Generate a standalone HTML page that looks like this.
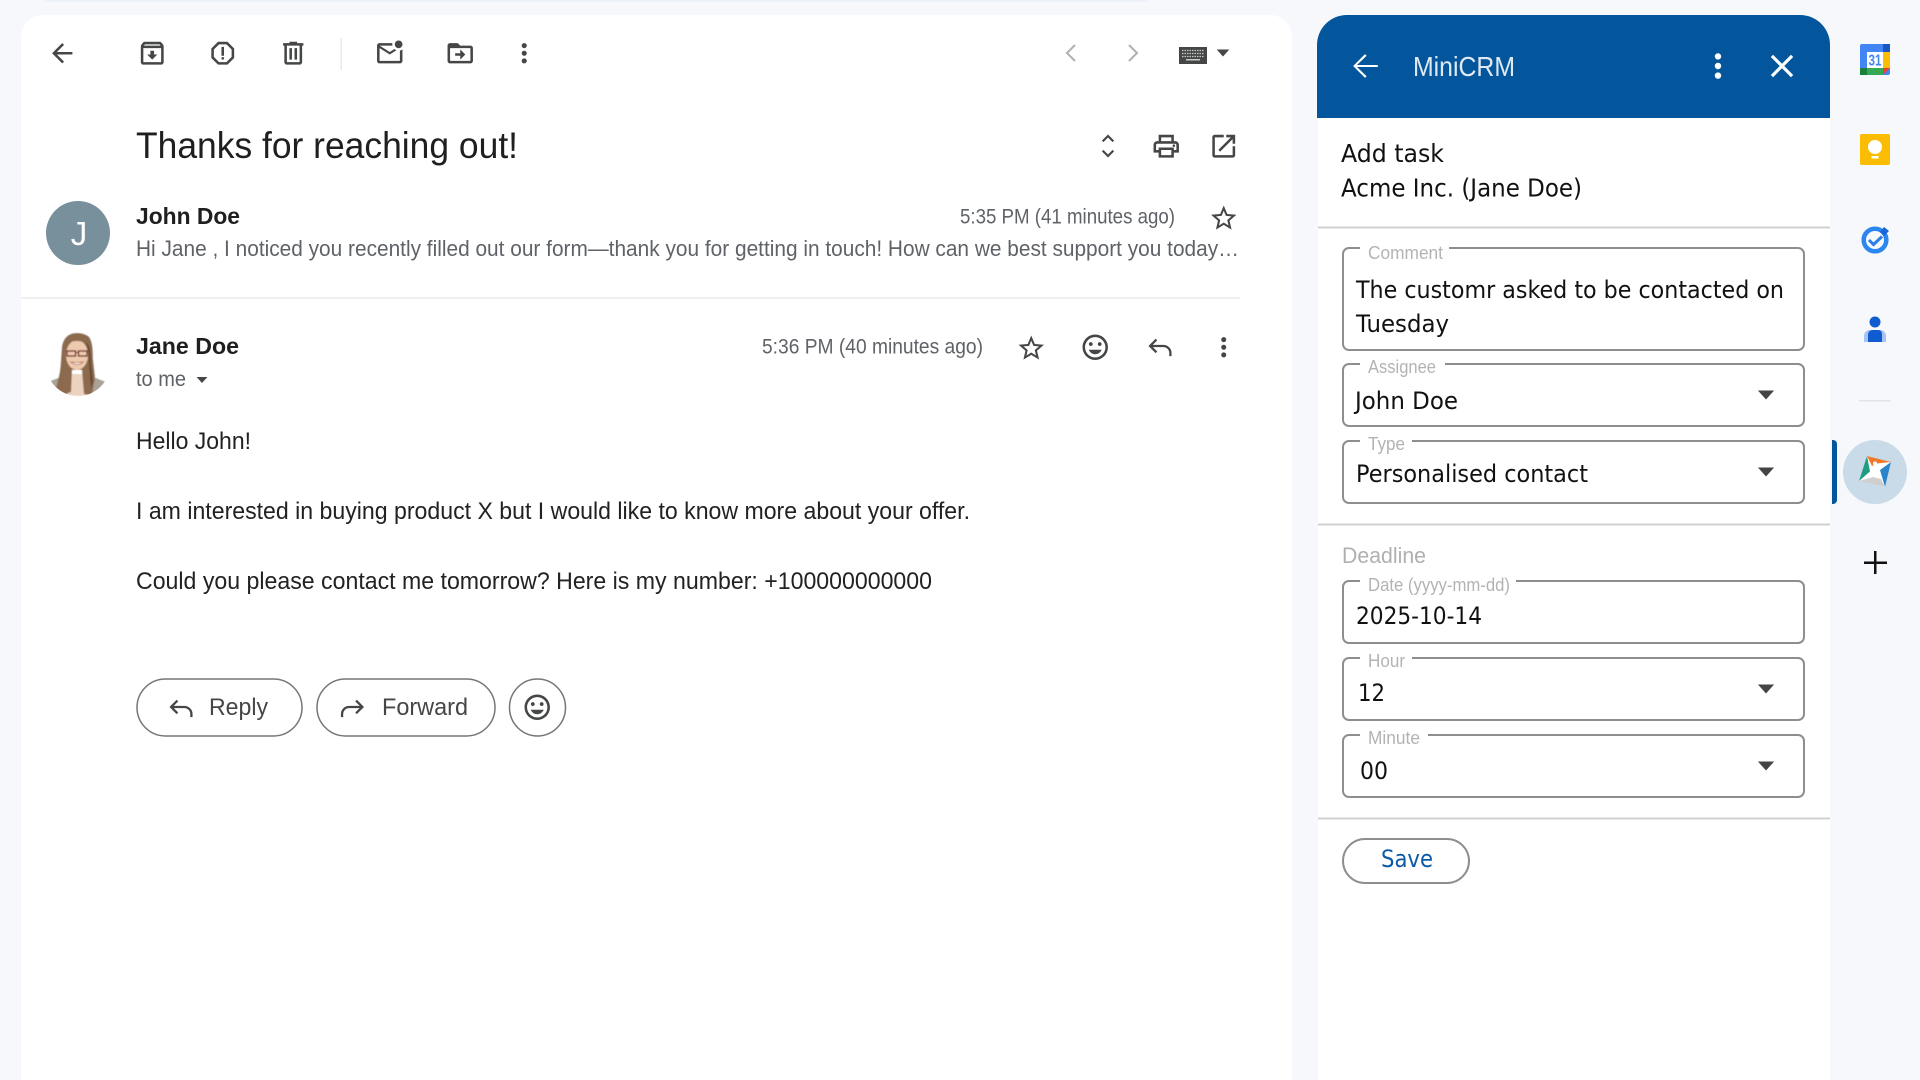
<!DOCTYPE html>
<html><head><meta charset="utf-8"><style>
html,body{margin:0;padding:0;width:1920px;height:1080px;overflow:hidden;background:#f6f8fc}
svg{display:block}
text{font-family:"Liberation Sans",sans-serif}
.o{font-family:"DejaVu Sans","Liberation Sans",sans-serif;fill:#111}
.l{font-family:"Liberation Sans",sans-serif;fill:#b3b3b3;font-size:18px}
.g{fill:#5f6368}
.f{fill:#fff;stroke:#8e8e8e;stroke-width:2}
</style></head><body>
<svg width="1920" height="1080" viewBox="0 0 1920 1080" xmlns="http://www.w3.org/2000/svg">
<defs>
<path id="more" d="M12 8c1.1 0 2-.9 2-2s-.9-2-2-2-2 .9-2 2 .9 2 2 2zm0 2c-1.1 0-2 .9-2 2s.9 2 2 2 2-.9 2-2-.9-2-2-2zm0 6c-1.1 0-2 .9-2 2s.9 2 2 2 2-.9 2-2-.9-2-2-2z"/>
<path id="star" d="M22 9.24l-7.19-.62L12 2 9.19 8.63 2 9.24l5.46 4.73L5.82 21 12 17.27 18.18 21l-1.63-7.03L22 9.24zM12 15.4l-3.76 2.27 1-4.28-3.32-2.88 4.38-.38L12 6.1l1.71 4.04 4.38.38-3.32 2.88 1 4.28L12 15.4z"/>
<path id="mood" d="M11.99 2C6.47 2 2 6.48 2 12s4.47 10 9.99 10C17.52 22 22 17.52 22 12S17.52 2 11.99 2zM12 20c-4.42 0-8-3.58-8-8s3.58-8 8-8 8 3.58 8 8-3.58 8-8 8zm3.5-9c.83 0 1.5-.67 1.5-1.5S16.33 8 15.5 8 14 8.67 14 9.5s.67 1.5 1.5 1.5zm-7 0c.83 0 1.5-.67 1.5-1.5S9.33 8 8.5 8 7 8.67 7 9.5 7.67 11 8.5 11zm3.5 6.5c2.33 0 4.31-1.46 5.11-3.5H6.89c.8 2.04 2.78 3.5 5.11 3.5z"/>
<path id="caret" d="M-9 -5H9L0 5z"/>
<clipPath id="av"><circle cx="78" cy="364" r="32"/></clipPath>
<filter id="soft" x="-10%" y="-10%" width="120%" height="120%"><feGaussianBlur stdDeviation=".6"/></filter>
</defs>

<rect x="45" y="0" width="1102" height="2" fill="#edf2fa"/>
<!-- main card -->
<path d="M21 1080V37a22 22 0 0 1 22-22H1270a22 22 0 0 1 22 22V1080z" fill="#fff"/>

<!-- toolbar -->
<g fill="#444746">
<g transform="translate(47,38) scale(1.27)"><path d="M20 11H7.83l5.59-5.59L12 4l-8 8 8 8 1.41-1.41L7.83 13H20v-2z"/></g>
<g transform="translate(137,38) scale(1.27)"><path d="M20.54 5.23l-1.39-1.68C18.88 3.21 18.47 3 18 3H6c-.47 0-.88.21-1.16.55L3.46 5.23C3.17 5.57 3 6.02 3 6.5V19c0 1.1.9 2 2 2h14c1.1 0 2-.9 2-2V6.5c0-.48-.17-.93-.46-1.27zM6.24 5h11.52l.83 1H5.42l.82-1zM5 19V8h14v11H5zm8.45-9h-2.9v3H8l4 4 4-4h-2.55z"/></g>
<g transform="translate(207.500,38) scale(1.27)"><path d="M15.73 3H8.27L3 8.27v7.46L8.27 21h7.46L21 15.73V8.27L15.73 3zM19 14.9L14.9 19H9.1L5 14.9V9.1L9.1 5h5.8L19 9.1v5.8z"/><circle cx="12" cy="16" r="1"/><path d="M11 7h2v7h-2z"/></g>
<g transform="translate(278,38) scale(1.27)"><path d="M15 4V3H9v1H4v2h1v13c0 1.1.9 2 2 2h10c1.1 0 2-.9 2-2V6h1V4h-5zm2 15H7V6h10v13zM9 8h2v9H9zm4 0h2v9h-2z"/></g>
<g transform="translate(374.500,38) scale(1.27)"><path d="M22 8.98V18c0 1.1-.9 2-2 2H4c-1.1 0-2-.9-2-2V6c0-1.1.9-2 2-2h10.1c-.06.32-.1.66-.1 1s.04.68.1 1H4l8 5 3.67-2.29c.47.43 1.02.76 1.63.98L12 13 4 8v10h16V9.9c.74-.15 1.42-.48 2-.92zM16 5c0 1.66 1.34 3 3 3s3-1.34 3-3-1.34-3-3-3-3 1.34-3 3z"/></g>
<g transform="translate(445,38) scale(1.27)"><path d="M20 6h-8l-2-2H4c-1.1 0-1.99.9-1.99 2L2 18c0 1.1.9 2 2 2h16c1.1 0 2-.9 2-2V8c0-1.1-.9-2-2-2zm0 12H4V8h16v10zm-8-4H8v-2h4V9l4 4-4 4v-3z"/></g>
<g transform="translate(509,38) scale(1.27)"><use href="#more"/></g>
</g>
<rect x="340.500" y="38" width="1.500" height="32" fill="#e9eaec"/>

<polyline points="1075,45 1067,53 1075,61" fill="none" stroke="#b0b0b0" stroke-width="2"/>
<polyline points="1129,45 1137,53 1129,61" fill="none" stroke="#b0b0b0" stroke-width="2"/>
<rect x="1179" y="47" width="28" height="17" fill="#444746"/>
<path d="M1182 50.500h22M1182 53.500h22M1182 56.500h22" stroke="#c8c8c8" stroke-width="1.200" stroke-dasharray="1.500 1"/>
<rect x="1186" y="59" width="14" height="1.500" fill="#c8c8c8"/>
<use href="#caret" transform="translate(1223,53) scale(.7)" fill="#444746"/>

<!-- subject -->
<text x="136" y="158" font-size="37" fill="#1f1f1f" textLength="382" lengthAdjust="spacingAndGlyphs">Thanks for reaching out!</text>
<g fill="#444746">
<g transform="translate(1090.600,128.600) scale(1.45)"><path d="M12 5.83L15.17 9l.7-.7L12 4.400 8.130 8.300l.7.7L12 5.830zm0 12.340L8.830 15l-.7.7L12 19.600l3.870-3.900-.7-.7L12 18.170z" stroke="#444746" stroke-width=".5"/></g>
<g transform="translate(1151,131) scale(1.27)"><path d="M19 8h-1V3H6v5H5c-1.66 0-3 1.34-3 3v6h4v4h12v-4h4v-6c0-1.66-1.34-3-3-3zM8 5h8v3H8V5zm8 12v2H8v-4h8v2zm2-2v-2H6v2H4v-4c0-.55.45-1 1-1h14c.55 0 1 .45 1 1v4h-2z"/><circle cx="18" cy="11.500" r="1"/></g>
<g transform="translate(1208.500,131) scale(1.27)"><path d="M19 19H5V5h7V3H5c-1.11 0-2 .9-2 2v14c0 1.1.89 2 2 2h14c1.1 0 2-.9 2-2v-7h-2v7zM14 3v2h3.59l-9.83 9.83 1.41 1.41L19 6.41V10h2V3h-7z"/></g>
</g>

<!-- message 1 -->
<circle cx="78" cy="233" r="32" fill="#78909c"/>
<text x="79" y="245" font-size="33" fill="#fff" text-anchor="middle">J</text>
<text x="136" y="224" font-size="23" font-weight="700" fill="#1f1f1f" textLength="104" lengthAdjust="spacingAndGlyphs">John Doe</text>
<text x="136" y="256" font-size="22" class="g" textLength="1103" lengthAdjust="spacingAndGlyphs">Hi Jane , I noticed you recently filled out our form—thank you for getting in touch! How can we best support you today…</text>
<text x="960" y="223.500" font-size="21" class="g" textLength="215" lengthAdjust="spacingAndGlyphs">5:35 PM (41 minutes ago)</text>
<g transform="translate(1208.500,203) scale(1.27)" fill="#444746"><use href="#star"/></g>
<rect x="21" y="297" width="1219" height="2" fill="#eeeff0"/>

<!-- message 2 -->
<g clip-path="url(#av)"><g filter="url(#soft)">
<rect x="46" y="332" width="64" height="64" fill="#fff"/>
<path d="M48 382l10-4 10-2h18l10 2 10 4v14H48z" fill="#a9a297"/>
<path d="M68 374h17l1 22H67z" fill="#ecd3c0"/>
<path d="M77 333c-8 0-13 4-15 13-1 10-1 22-3 30l-3 13 9 5 6-2 1-22h10l2 24 8 1 3-18-2-18c0-11-1-20-5-23-3-2-7-3-11-3z" fill="#8c6a4e"/>
<path d="M85 340c3 6 4 14 4 24l2 24 2-6-2-18c0-10-1-19-6-24z" fill="#6a4a34"/>
<ellipse cx="77" cy="355" rx="11" ry="15" fill="#edc9ae"/>
<path d="M66 343c3-4 8-5 11-5s8 2 11 5c-4-1-8-2-11-2s-7 1-11 2z" fill="#8c6a4e"/>
<rect x="67" y="351" width="8.500" height="5" fill="none" stroke="#6d2f25" stroke-width="1.300"/>
<rect x="78.500" y="351" width="8.500" height="5" fill="none" stroke="#6d2f25" stroke-width="1.300"/>
<rect x="75" y="352" width="4" height="1" fill="#6d2f25"/>
<path d="M71 362q6 5 12 0q-6 1-12 0z" fill="#fff" stroke="#b5604f" stroke-width=".8"/>
</g></g>
<text x="136" y="354" font-size="23" font-weight="700" fill="#1f1f1f" textLength="103" lengthAdjust="spacingAndGlyphs">Jane Doe</text>
<text x="136" y="386" font-size="21" class="g" textLength="50" lengthAdjust="spacingAndGlyphs">to me</text>
<use href="#caret" transform="translate(202,380) scale(.6)" fill="#444746"/>
<text x="762" y="353.500" font-size="21" class="g" textLength="221" lengthAdjust="spacingAndGlyphs">5:36 PM (40 minutes ago)</text>
<g fill="#444746">
<g transform="translate(1016,333) scale(1.27)"><use href="#star"/></g>
<g transform="translate(1080,332) scale(1.27)"><use href="#mood"/></g>
<g transform="translate(1208.500,332) scale(1.27)"><use href="#more"/></g>
</g>
<g transform="translate(1145,332) scale(1.27)" fill="none" stroke="#444746" stroke-width="1.800"><path d="M9 6L4 11l5 5M4 11h10.500a5.500 5.500 0 0 1 5.500 5.500V19"/></g>

<!-- body -->
<text x="136" y="449" font-size="24" fill="#222" textLength="115" lengthAdjust="spacingAndGlyphs">Hello John!</text>
<text x="136" y="519" font-size="24" fill="#222" textLength="834" lengthAdjust="spacingAndGlyphs">I am interested in buying product X but I would like to know more about your offer.</text>
<text x="136" y="589" font-size="24" fill="#222" textLength="796" lengthAdjust="spacingAndGlyphs">Could you please contact me tomorrow? Here is my number: +100000000000</text>

<!-- buttons -->
<rect x="137" y="679" width="165" height="57" rx="28.500" fill="#fff" stroke="#747775" stroke-width="1.500"/>
<rect x="317" y="679" width="178" height="57" rx="28.500" fill="#fff" stroke="#747775" stroke-width="1.500"/>
<ellipse cx="537.500" cy="707.500" rx="28" ry="28.500" fill="#fff" stroke="#747775" stroke-width="1.500"/>
<g transform="translate(166,693) scale(1.27)" fill="none" stroke="#444746" stroke-width="1.800"><path d="M9 6L4 11l5 5M4 11h10.500a5.500 5.500 0 0 1 5.500 5.500V19"/></g>
<g transform="translate(337,693) scale(1.27)" fill="none" stroke="#444746" stroke-width="1.800"><path d="M15 6l5 5-5 5M20 11H9.500A5.500 5.500 0 0 0 4 16.500V19"/></g>
<text x="209" y="715" font-size="24" fill="#444746" textLength="59" lengthAdjust="spacingAndGlyphs">Reply</text>
<text x="382" y="715" font-size="24" fill="#444746" textLength="86" lengthAdjust="spacingAndGlyphs">Forward</text>
<g transform="translate(522,692) scale(1.27)" fill="#444746"><use href="#mood"/></g>

<!-- side panel -->
<path d="M1318 1080V118H1830V1080z" fill="#fff"/>
<path d="M1317 118V45a30 30 0 0 1 30-30H1800a30 30 0 0 1 30 30V118z" fill="#03569b"/>
<g transform="translate(1345.800,46.800) scale(1.6)" fill="#fff"><path d="M20 11.400H7L13 5.600 12 4.600 4.600 12 12 19.400l1-1-6-5.800h13v-1.200z"/></g>
<text x="1413" y="76" font-size="28" fill="#dfe9f3" textLength="102" lengthAdjust="spacingAndGlyphs">MiniCRM</text>
<g transform="translate(1698.800,46.800) scale(1.6)" fill="#fff"><use href="#more"/></g>
<g transform="translate(1762.800,46.800) scale(1.6)" fill="#fff"><path d="M19 6.410L17.590 5 12 10.590 6.410 5 5 6.410 10.590 12 5 17.590 6.410 19 12 13.410 17.590 19 19 17.590 13.410 12z"/></g>

<text x="1341" y="162" font-size="25" class="o" textLength="103" lengthAdjust="spacingAndGlyphs">Add task</text>
<text x="1341" y="196.500" font-size="25" class="o" textLength="241" lengthAdjust="spacingAndGlyphs">Acme Inc. (Jane Doe)</text>
<rect x="1318" y="226.500" width="512" height="2" fill="#d0d0d0"/>

<!-- comment -->
<rect x="1343" y="248" width="461" height="102" rx="6" class="f"/>
<rect x="1360" y="244" width="89" height="8" fill="#fff"/>
<text x="1368" y="259" class="l" textLength="75" lengthAdjust="spacingAndGlyphs">Comment</text>
<text x="1356" y="298" font-size="24" class="o" textLength="428" lengthAdjust="spacingAndGlyphs">The customr asked to be contacted on</text>
<text x="1356" y="332" font-size="24" class="o" textLength="93" lengthAdjust="spacingAndGlyphs">Tuesday</text>

<!-- assignee -->
<rect x="1343" y="364" width="461" height="62" rx="6" class="f"/>
<rect x="1360" y="360" width="85" height="8" fill="#fff"/>
<text x="1368" y="373" class="l" textLength="68" lengthAdjust="spacingAndGlyphs">Assignee</text>
<text x="1355" y="409" font-size="24" class="o" textLength="103" lengthAdjust="spacingAndGlyphs">John Doe</text>
<use href="#caret" transform="translate(1766,395) scale(.9)" fill="#444"/>

<!-- type -->
<rect x="1343" y="441" width="461" height="62" rx="6" class="f"/>
<rect x="1360" y="437" width="52" height="8" fill="#fff"/>
<text x="1368" y="450" class="l" textLength="37" lengthAdjust="spacingAndGlyphs">Type</text>
<text x="1356" y="482" font-size="24" class="o" textLength="232" lengthAdjust="spacingAndGlyphs">Personalised contact</text>
<use href="#caret" transform="translate(1766,472) scale(.9)" fill="#444"/>

<rect x="1318" y="523.500" width="512" height="2" fill="#d0d0d0"/>
<text x="1342" y="563" font-size="22" fill="#b0b0b0" textLength="84" lengthAdjust="spacingAndGlyphs">Deadline</text>

<!-- date -->
<rect x="1343" y="581" width="461" height="62" rx="6" class="f"/>
<rect x="1360" y="577" width="156" height="8" fill="#fff"/>
<text x="1368" y="591" class="l" textLength="142" lengthAdjust="spacingAndGlyphs">Date (yyyy-mm-dd)</text>
<text x="1356" y="624" font-size="24" class="o" textLength="126" lengthAdjust="spacingAndGlyphs">2025-10-14</text>

<!-- hour -->
<rect x="1343" y="658" width="461" height="62" rx="6" class="f"/>
<rect x="1360" y="654" width="52" height="8" fill="#fff"/>
<text x="1368" y="667" class="l" textLength="37" lengthAdjust="spacingAndGlyphs">Hour</text>
<text x="1358" y="701" font-size="24" class="o" textLength="27" lengthAdjust="spacingAndGlyphs">12</text>
<use href="#caret" transform="translate(1766,689) scale(.9)" fill="#444"/>

<!-- minute -->
<rect x="1343" y="735" width="461" height="62" rx="6" class="f"/>
<rect x="1360" y="731" width="68" height="8" fill="#fff"/>
<text x="1368" y="744" class="l" textLength="52" lengthAdjust="spacingAndGlyphs">Minute</text>
<text x="1360" y="779" font-size="24" class="o" textLength="28" lengthAdjust="spacingAndGlyphs">00</text>
<use href="#caret" transform="translate(1766,766) scale(.9)" fill="#444"/>

<rect x="1318" y="817.500" width="512" height="2" fill="#d0d0d0"/>
<rect x="1343" y="839" width="126" height="44" rx="22" class="f"/>
<text x="1381" y="867" font-size="24" class="o" style="fill:#0b5aa6" textLength="52" lengthAdjust="spacingAndGlyphs">Save</text>

<!-- right rail -->
<g>
<rect x="1860" y="44" width="30" height="31" rx="2" fill="#4285f4"/>
<rect x="1883" y="44" width="7" height="8" fill="#1a56c4"/>
<rect x="1883" y="52" width="7" height="16" fill="#fbbc04"/>
<rect x="1860" y="68" width="7" height="7" fill="#188038"/>
<rect x="1867" y="68" width="16" height="7" fill="#34a853"/>
<path d="M1883 68h7l-7 7z" fill="#ea4335"/>
<rect x="1867" y="52" width="16" height="16" fill="#fff"/>
<text x="1875" y="65.500" font-size="16" font-weight="700" fill="#4285f4" text-anchor="middle" textLength="13" lengthAdjust="spacingAndGlyphs">31</text>
</g>
<rect x="1860" y="134" width="30" height="31" rx="2" fill="#fbbc04"/>
<circle cx="1875" cy="147" r="7" fill="#fff"/>
<rect x="1871.500" y="156" width="7" height="2.500" fill="#fff"/>
<circle cx="1875" cy="240" r="11.300" fill="none" stroke="#2b86f0" stroke-width="4.500"/>
<path d="M1869 240l4.500 4.500 8.500-8" fill="none" stroke="#2b7de9" stroke-width="3"/>
<path d="M1884 227l5 4-5 5-4-4z" fill="#1a65d8"/>
<circle cx="1875" cy="322" r="5.500" fill="#0f5bd0"/>
<path d="M1864 342v-6c0-4 3-6 6-6h10c3 0 6 2 6 6v6z" fill="#a5c3f3"/>
<path d="M1868 342v-7c0-3 2-5 5-5h5c3 0 4 2 4 5v7z" fill="#0f5bd0"/>
<rect x="1859" y="400" width="32" height="1.500" fill="#e3e4e6"/>
<path d="M1832 440h1a4 4 0 0 1 4 4v56a4 4 0 0 1-4 4h-1z" fill="#03569b"/>
<circle cx="1875" cy="472" r="32" fill="#c9dae9"/>
<path d="M1867 456L1891 462.300 1885 487.300 1859 480.700z" fill="#fff"/>
<path d="M1867 456L1891 462 1877 463.500 1872 466z" fill="#f07a2a"/>
<path d="M1867 456L1859 481 1870 471.500z" fill="#1f9c83"/>
<path d="M1891 462L1885 487 1880 470z" fill="#2b84c9"/>
<path d="M1859 481L1873 477 1881 479 1885 487z" fill="#cfcfcf"/>
<circle cx="1875" cy="463.500" r="2" fill="#fff"/>
<rect x="1874" y="551" width="2.500" height="23" fill="#111"/>
<rect x="1864" y="561.500" width="23" height="2.500" fill="#111"/>
</svg>
</body></html>
